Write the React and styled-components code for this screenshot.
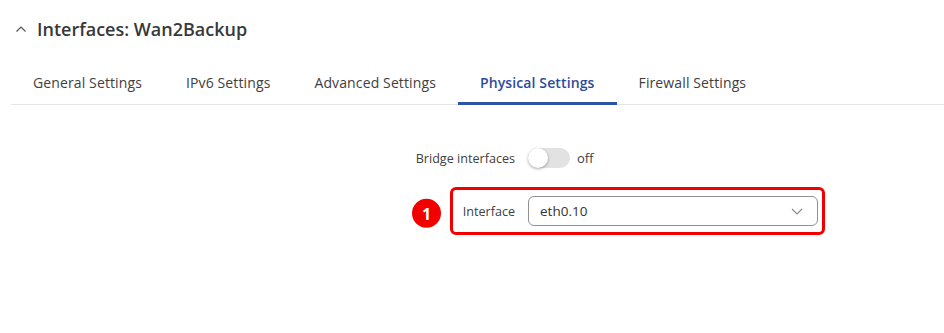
import styled, { createGlobalStyle } from 'styled-components';

const GlobalStyle = createGlobalStyle`
  body {
    margin: 0;
    background: #fff;
    font-family: "Open Sans", "Liberation Sans", sans-serif;
    color: #404040;
  }
`;

const Page = styled.div`
  width: 944px;
  height: 333px;
  overflow: hidden;
`;

const Header = styled.div`
  display: flex;
  align-items: center;
  gap: 10px;
  padding: 17px 0 0 15px;
  height: 24px;
`;

const Title = styled.h1`
  margin: 0;
  font-size: 18px;
  line-height: 24px;
  font-weight: 600;
  color: #383838;
`;

const Tabs = styled.div`
  display: flex;
  margin: 20px 0 0 11px;
  border-bottom: 1px solid #e5e5e5;
`;

const Tab = styled.div`
  position: relative;
  padding: 12px 22px 11px;
  font-size: 14px;
  line-height: 20px;
  letter-spacing: 0.12px;
  font-weight: ${({ active }) => (active ? 600 : 400)};
  color: ${({ active }) => (active ? '#2c4b9b' : '#404040')};
  cursor: pointer;

  &::after {
    content: '';
    display: ${({ active }) => (active ? 'block' : 'none')};
    position: absolute;
    left: 0;
    right: 0;
    bottom: -1px;
    height: 3px;
    background: #2d53a6;
  }
`;

const Form = styled.div`
  display: flex;
  flex-direction: column;
  gap: 23px;
  margin: 38px 0 0 395px;
`;

const Row = styled.div`
  position: relative;
  display: grid;
  grid-template-columns: 120px auto;
  column-gap: 13px;
  align-items: center;
  height: 30px;
  width: 423px;
`;

const Label = styled.label`
  text-align: right;
  font-size: 12.6px;
  color: #404040;
`;

const ToggleWrap = styled.div`
  display: flex;
  align-items: center;
  gap: 7px;
  font-size: 13px;
  color: #404040;
`;

const Track = styled.div`
  position: relative;
  width: 42px;
  height: 20px;
  border-radius: 10px;
  background: #e2e2e2;
`;

const Knob = styled.div`
  position: absolute;
  left: 0;
  top: 0;
  width: 20px;
  height: 20px;
  border-radius: 50%;
  background: #fff;
  box-shadow: 0 1px 3px rgba(0, 0, 0, 0.35);
`;

const Select = styled.div`
  display: flex;
  align-items: center;
  justify-content: space-between;
  box-sizing: border-box;
  width: 290px;
  height: 30px;
  padding: 0 14px 0 11px;
  border: 1px solid #909090;
  border-radius: 6px;
  font-size: 13.5px;
  color: #333;
`;

const Highlight = styled.div`
  position: absolute;
  left: 55px;
  right: -7px;
  top: -9px;
  bottom: -9px;
  border: 3px solid #f20000;
  border-radius: 6px;
  pointer-events: none;
`;

const Badge = styled.div`
  position: absolute;
  left: 17px;
  top: 50%;
  transform: translateY(-42%);
  width: 29px;
  height: 29px;
  border-radius: 50%;
  background: #f20000;
  color: #fff;
  display: flex;
  align-items: center;
  justify-content: center;
  font-size: 16px;
  font-weight: 700;
`;

const tabs = ['General Settings', 'IPv6 Settings', 'Advanced Settings', 'Physical Settings', 'Firewall Settings'];

export default function App() {
  return (
    <Page>
      <GlobalStyle />
      <Header>
        <svg width="12" height="8" viewBox="0 0 12 8" fill="none">
          <path d="M1.5 6.5L6 2l4.5 4.5" stroke="#555" strokeWidth="1.2" />
        </svg>
        <Title>Interfaces: Wan2Backup</Title>
      </Header>
      <Tabs>
        {tabs.map((t) => (
          <Tab key={t} active={t === 'Physical Settings'}>{t}</Tab>
        ))}
      </Tabs>
      <Form>
        <Row>
          <Label>Bridge interfaces</Label>
          <ToggleWrap>
            <Track><Knob /></Track>
            off
          </ToggleWrap>
        </Row>
        <Row>
          <Badge>1</Badge>
          <Highlight />
          <Label>Interface</Label>
          <Select>
            eth0.10
            <svg width="12" height="7" viewBox="0 0 12 7" fill="none">
              <path d="M1 1l5 5 5-5" stroke="#888" strokeWidth="1.1" />
            </svg>
          </Select>
        </Row>
      </Form>
    </Page>
  );
}
